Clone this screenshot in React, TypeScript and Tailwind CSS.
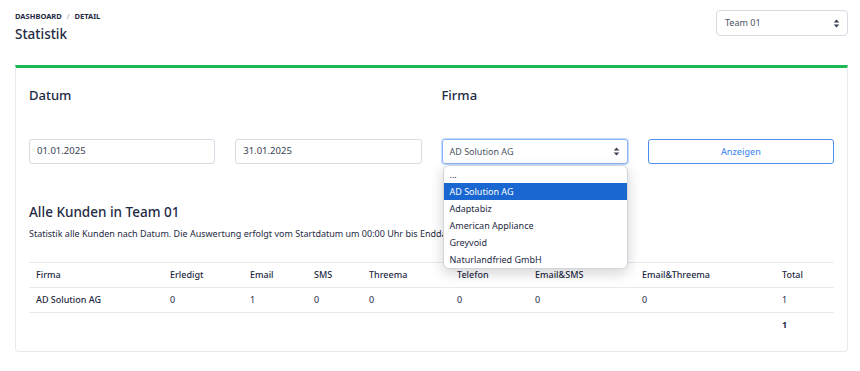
const firmen = ["...", "AD Solution AG", "Adaptabiz", "American Appliance", "Greyvoid", "Naturlandfried GmbH"];

const columns = [
  { label: "Firma", w: "w-[134px]" },
  { label: "Erledigt", w: "w-[80px]" },
  { label: "Email", w: "w-[64px]" },
  { label: "SMS", w: "w-[55px]" },
  { label: "Threema", w: "w-[88px]" },
  { label: "Telefon", w: "w-[78px]" },
  { label: "Email&SMS", w: "w-[107px]" },
  { label: "Email&Threema", w: "w-[140px]" },
  { label: "Total", w: "w-[59px]" },
];

const row = ["AD Solution AG", "0", "1", "0", "0", "0", "0", "0", "1"];

function Arrows() {
  return (
    <svg width="7" height="9" viewBox="0 0 7 9" className="text-[#374151]">
      <path d="M3.5 0.5 L6.3 3.6 H0.7 Z" fill="currentColor" />
      <path d="M3.5 8.5 L6.3 5.4 H0.7 Z" fill="currentColor" />
    </svg>
  );
}

export default function App() {
  return (
    <div
      className="min-h-[371px] bg-white pl-[15px] pr-[12px] pt-[10px] text-[#1e2a44]"
      style={{ fontFamily: '"Noto Sans", "Liberation Sans", sans-serif' }}
    >
      {/* Header */}
      <div className="flex items-start justify-between">
        <div>
          <div className="mt-[1px] text-[7.5px] font-bold uppercase text-[#1e2a44]">
            Dashboard <span className="mx-[3px] font-normal text-gray-400">/</span> Detail
          </div>
          <h1 className="mt-[2px] text-[13.5px] font-medium leading-5">Statistik</h1>
        </div>
        <div className="flex h-[26px] w-[132px] items-center justify-between rounded border border-[#d7dbe3] pl-[8px] pr-[7px] text-[9px] text-[#4b5563]">
          <span>Team 01</span>
          <Arrows />
        </div>
      </div>

      {/* Card */}
      <div className="mt-[21px] rounded-b-[4px] border border-t-[3px] border-[#e7e9ef] border-t-[#1db954] px-[13px] pb-[14px]">
        <div className="grid grid-cols-4 gap-x-5">
          <h2 className="col-span-2 mt-[18px] text-[13px] font-medium">Datum</h2>
          <h2 className="col-span-2 mt-[18px] text-[13px] font-medium">Firma</h2>
        </div>

        <div className="mt-[33px] grid grid-cols-4 gap-x-5">
          <div className="flex h-[25px] items-center rounded-[3px] border border-[#d7dbe3] px-[7px] text-[9.5px] text-[#374151]">
            01.01.2025
          </div>
          <div className="flex h-[25px] items-center rounded-[3px] border border-[#d7dbe3] px-[7px] text-[9.5px] text-[#374151]">
            31.01.2025
          </div>
          <div className="relative">
            <div className="flex h-[25px] items-center justify-between rounded-[3px] border border-[#8ab4f8] pl-[7px] pr-[7px] text-[9px] text-[#4b5563] shadow-[0_0_0_1px_#c6dafc]">
              <span>AD Solution AG</span>
              <Arrows />
            </div>
            <div className="absolute left-[1px] right-0 top-[26px] z-10 rounded-[6px] border border-[#d1d5db] bg-white text-[9px] text-[#1e2a44] shadow-[0_4px_14px_rgba(0,0,0,0.18)]">
              {firmen.map((f) => (
                <div
                  key={f}
                  className={`flex h-[17px] items-center px-[6px] ${
                    f === "AD Solution AG" ? "bg-[#1a67d2] text-white" : ""
                  }`}
                >
                  {f}
                </div>
              ))}
            </div>
          </div>
          <button className="h-[25px] rounded-[3px] border border-[#4d8ef0] text-[9px] font-medium text-[#4d8ef0]">
            Anzeigen
          </button>
        </div>

        <h2 className="mt-[38px] text-[13.5px] font-medium">Alle Kunden in Team 01</h2>
        <p className="mt-[5px] text-[9px] text-[#1e2a44]">
          Statistik alle Kunden nach Datum. Die Auswertung erfolgt vom Startdatum um 00:00 Uhr bis Enddatum um 23:59 Uhr.
        </p>

        <table className="mt-[21px] w-full border-collapse text-left text-[9px]">
          <thead>
            <tr className="h-[25px] border-y border-[#e7e9ef]">
              {columns.map((c) => (
                <th key={c.label} className={`${c.w} px-[7px] font-medium`}>
                  {c.label}
                </th>
              ))}
            </tr>
          </thead>
          <tbody>
            <tr className="h-[25px] border-b border-[#e7e9ef]">
              {row.map((v, i) => (
                <td key={i} className={`px-[7px] ${i === 0 ? "font-medium" : ""}`}>
                  {v}
                </td>
              ))}
            </tr>
            <tr className="h-[25px]">
              {row.map((_, i) => (
                <td key={i} className="px-[7px] font-bold">
                  {i === 8 ? "1" : ""}
                </td>
              ))}
            </tr>
          </tbody>
        </table>
      </div>
    </div>
  );
}
